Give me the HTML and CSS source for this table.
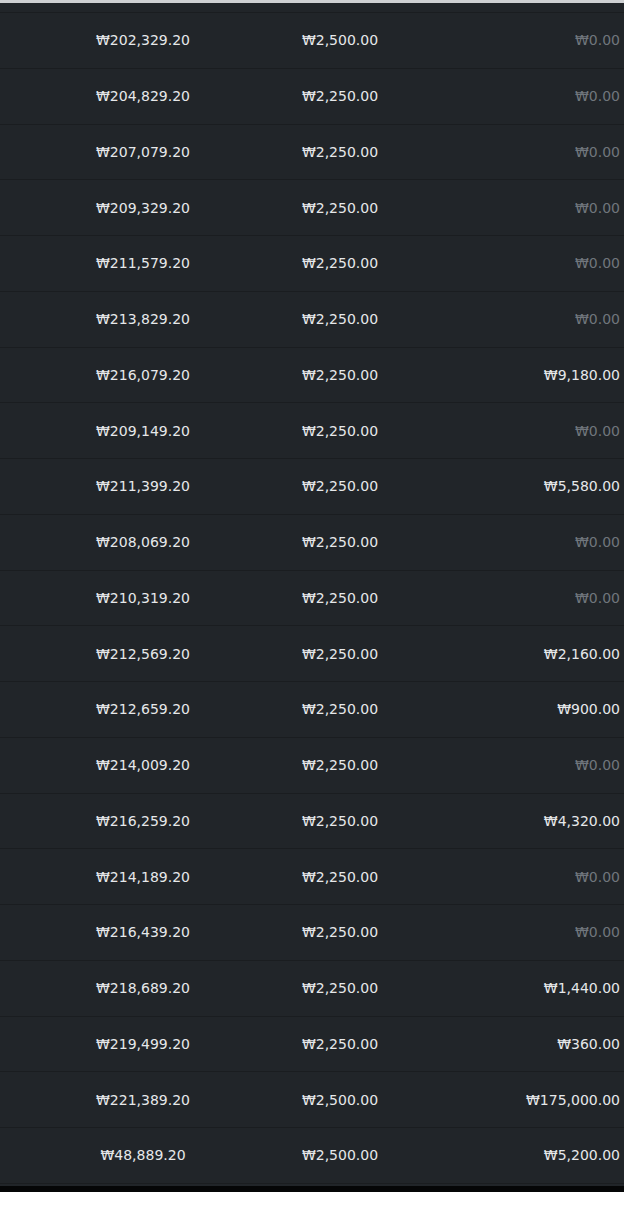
FILE: index.html
```html
<!DOCTYPE html>
<html lang="ko">
<head>
<meta charset="utf-8">
<title>Ledger</title>
<link rel="stylesheet" href="styles.css">
</head>
<body>
<div class="topbar"></div>
<div class="ledger">
  <div class="row"><span class="c1">₩202,329.20</span><span class="c2">₩2,500.00</span><span class="c3 zero">₩0.00</span></div>
  <div class="row"><span class="c1">₩204,829.20</span><span class="c2">₩2,250.00</span><span class="c3 zero">₩0.00</span></div>
  <div class="row"><span class="c1">₩207,079.20</span><span class="c2">₩2,250.00</span><span class="c3 zero">₩0.00</span></div>
  <div class="row"><span class="c1">₩209,329.20</span><span class="c2">₩2,250.00</span><span class="c3 zero">₩0.00</span></div>
  <div class="row"><span class="c1">₩211,579.20</span><span class="c2">₩2,250.00</span><span class="c3 zero">₩0.00</span></div>
  <div class="row"><span class="c1">₩213,829.20</span><span class="c2">₩2,250.00</span><span class="c3 zero">₩0.00</span></div>
  <div class="row"><span class="c1">₩216,079.20</span><span class="c2">₩2,250.00</span><span class="c3">₩9,180.00</span></div>
  <div class="row"><span class="c1">₩209,149.20</span><span class="c2">₩2,250.00</span><span class="c3 zero">₩0.00</span></div>
  <div class="row"><span class="c1">₩211,399.20</span><span class="c2">₩2,250.00</span><span class="c3">₩5,580.00</span></div>
  <div class="row"><span class="c1">₩208,069.20</span><span class="c2">₩2,250.00</span><span class="c3 zero">₩0.00</span></div>
  <div class="row"><span class="c1">₩210,319.20</span><span class="c2">₩2,250.00</span><span class="c3 zero">₩0.00</span></div>
  <div class="row"><span class="c1">₩212,569.20</span><span class="c2">₩2,250.00</span><span class="c3">₩2,160.00</span></div>
  <div class="row"><span class="c1">₩212,659.20</span><span class="c2">₩2,250.00</span><span class="c3">₩900.00</span></div>
  <div class="row"><span class="c1">₩214,009.20</span><span class="c2">₩2,250.00</span><span class="c3 zero">₩0.00</span></div>
  <div class="row"><span class="c1">₩216,259.20</span><span class="c2">₩2,250.00</span><span class="c3">₩4,320.00</span></div>
  <div class="row"><span class="c1">₩214,189.20</span><span class="c2">₩2,250.00</span><span class="c3 zero">₩0.00</span></div>
  <div class="row"><span class="c1">₩216,439.20</span><span class="c2">₩2,250.00</span><span class="c3 zero">₩0.00</span></div>
  <div class="row"><span class="c1">₩218,689.20</span><span class="c2">₩2,250.00</span><span class="c3">₩1,440.00</span></div>
  <div class="row"><span class="c1">₩219,499.20</span><span class="c2">₩2,250.00</span><span class="c3">₩360.00</span></div>
  <div class="row"><span class="c1">₩221,389.20</span><span class="c2">₩2,500.00</span><span class="c3">₩175,000.00</span></div>
  <div class="row last"><span class="c1">₩48,889.20</span><span class="c2">₩2,500.00</span><span class="c3">₩5,200.00</span></div>
</div>
<div class="bottombar"></div>
</body>
</html>
```

FILE: styles.css
```css
html, body {
  margin: 0;
  padding: 0;
  background: #ffffff;
}
.topbar {
  height: 3px;
  background: #cfd1d3;
}
.ledger {
  background: #212529;
  padding-top: 9px;
  padding-bottom: 2px;
  font-family: "DejaVu Sans", "Noto Sans", sans-serif;
  font-size: 14px;
  color: #e6e8ea;
}
.row {
  box-sizing: border-box;
  height: 55.76px;
  border-top: 1px solid #1a1d20;
  display: grid;
  grid-template-columns: 286px 108px 1fr;
  align-items: center;
}
.row.last {
  height: 56.76px;
  border-bottom: 1px solid #1a1d20;
}
.c1, .c2 {
  text-align: center;
  white-space: nowrap;
}
.c3 {
  text-align: right;
  padding-right: 4px;
  white-space: nowrap;
}
.zero {
  color: #70767c;
}
.bottombar {
  height: 6px;
  background: #050607;
}
```
